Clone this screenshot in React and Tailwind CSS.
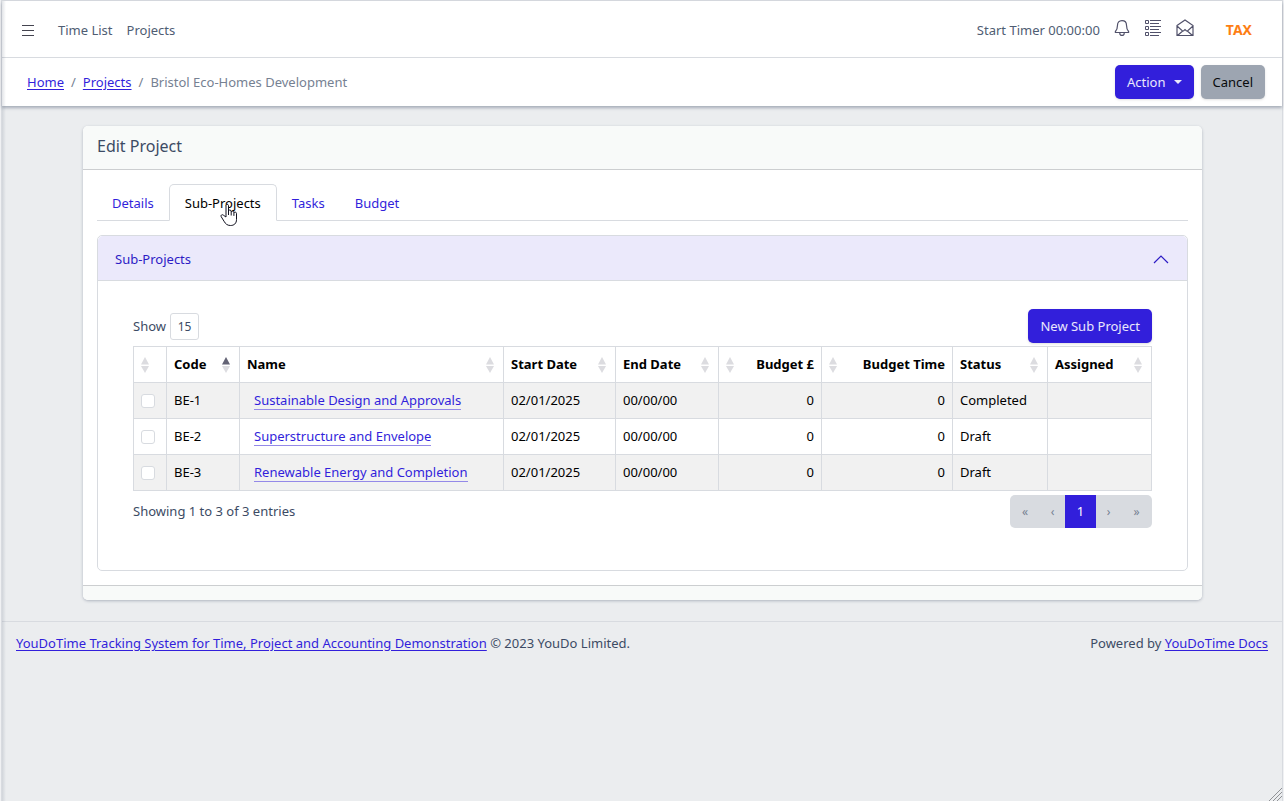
const columns = [
  { label: "", width: "w-[33px]" },
  { label: "Code", width: "w-[73px]", sorted: true },
  { label: "Name" },
  { label: "Start Date", width: "w-28" },
  { label: "End Date", width: "w-[103px]" },
  { label: "Budget £", width: "w-[103px]", right: true },
  { label: "Budget Time", width: "w-[131px]", right: true },
  { label: "Status", width: "w-[95px]" },
  { label: "Assigned", width: "w-[104px]" },
];

const rows = [
  { code: "BE-1", name: "Sustainable Design and Approvals", status: "Completed" },
  { code: "BE-2", name: "Superstructure and Envelope", status: "Draft" },
  { code: "BE-3", name: "Renewable Energy and Completion", status: "Draft" },
];

const link = "text-[#321fdb] underline underline-offset-2";

function BellIcon() {
  return (
    <svg viewBox="0 0 16 16" className="size-4" fill="none" stroke="currentColor" strokeWidth="1.2">
      <path d="M8 .6c-3 0-4.500 2-4.500 4.600 0 3-.5 4.500-2.100 6.300v1h13.200v-1c-1.600-1.800-2.100-3.300-2.100-6.300C12.500 2.600 11 .6 8 .6Z" />
      <path d="M5.800 12.700v.5a2.200 2.200 0 0 0 4.400 0v-.5" />
    </svg>
  );
}

function ListIcon() {
  return (
    <svg viewBox="0 0 18 18" className="size-[18px]" fill="none" stroke="currentColor">
      <path d="M1.500 1.500h3v3h-3zM1.500 7.500h3v3h-3zM1.500 13.500h3v3h-3zM6 1.500h11M6 4.500h9M6 7.500h11M6 10.500h9M6 13.500h11M6 16.500h9" />
    </svg>
  );
}

function MailIcon() {
  return (
    <svg viewBox="0 0 18 18" className="size-[18px]" fill="none" stroke="currentColor" strokeWidth="1.2">
      <path d="M1 6.500 9 1l8 5.500v10H1zM1 7l5.500 5h1L9 10.500l1.500 1.500h1L17 7M1.500 16.500 7 11.700M16.500 16.500 11 11.700" />
    </svg>
  );
}

function SortIcon({ sorted }) {
  return (
    <svg viewBox="0 0 8 16" className="h-4 w-2 shrink-0">
      <path d="M4 0 8 7.500H0z" fill={sorted ? "#636375" : "#dcdce0"} />
      <path d="M0 9h8l-4 7z" fill="#dcdce0" />
    </svg>
  );
}

function Header() {
  return (
    <header className="relative bg-white shadow-[0_2px_3px_rgba(60,75,100,0.4)]">
      <div className="flex h-[57px] items-center border-b border-[#d8dbe0] pt-0.5 pr-[30px] pl-5 text-[#4f5d73]">
        <button aria-label="Toggle menu" className="flex w-3 flex-col gap-1">
          <span className="h-px w-full bg-[#44444f]" />
          <span className="h-px w-full bg-[#44444f]" />
          <span className="h-px w-full bg-[#44444f]" />
        </button>
        <nav className="ml-6 flex gap-[14px]">
          <a href="#time">Time List</a>
          <a href="#projects">Projects</a>
        </nav>
        <div className="ml-auto flex items-center">
          <button>Start Timer 00:00:00</button>
          <div className="ml-[14px] flex items-center gap-[14px] pb-1 text-[#51516a]">
            <button aria-label="Notifications"><BellIcon /></button>
            <button aria-label="Tasks"><ListIcon /></button>
            <button aria-label="Messages"><MailIcon /></button>
          </div>
          <a href="#tax" className="ml-8 text-sm font-bold text-[#fd7e14]">TAX</a>
        </div>
      </div>
      <div className="flex h-12 items-center pr-[17px] pl-[25px]">
        <nav aria-label="Breadcrumb" className="flex gap-[7px] text-[#768192]">
          <a href="#home" className={link}>Home</a>
          <span>/</span>
          <a href="#projects" className={link}>Projects</a>
          <span>/</span>
          <span>Bristol Eco-Homes Development</span>
        </nav>
        <div className="ml-auto flex gap-[7px]">
          <button className="flex h-[34px] items-center gap-2 rounded-[5px] bg-[#321fdb] px-3 text-white/90 shadow-sm">
            Action
            <span className="border-x-4 border-t-4 border-x-transparent" />
          </button>
          <button className="h-[34px] rounded-[5px] bg-[#9da5b1] px-3 text-[#080a0c] shadow-sm">Cancel</button>
        </div>
      </div>
    </header>
  );
}

function ProjectTable() {
  return (
    <table className="w-full table-fixed border-collapse text-left text-black">
      <thead>
        <tr className="h-9">
          {columns.map(({ label, width, right, sorted }) => (
            <th key={label} className={`border border-[#d8dbe0] px-[7px] font-bold whitespace-nowrap ${width || ""}`}>
              <div className={`flex items-center justify-between ${right ? "flex-row-reverse" : "pr-[2px]"}`}>
                {label && <span>{label}</span>}
                <SortIcon sorted={sorted} />
              </div>
            </th>
          ))}
        </tr>
      </thead>
      <tbody>
        {rows.map((row) => (
          <tr key={row.code} className="h-9 odd:bg-[#f1f1f1] [&>td]:border [&>td]:border-[#d8dbe0] [&>td]:px-[7px]">
            <td>
              <input
                type="checkbox"
                aria-label={`Select ${row.code}`}
                className="block size-[14px] appearance-none rounded-[3px] border border-[#d8dbe0] bg-white"
              />
            </td>
            <td>{row.code}</td>
            <td>
              <a href={`#${row.code}`} className="ml-[7px] border-b border-[#9489e8] text-[#321fdb]">{row.name}</a>
            </td>
            <td>02/01/2025</td>
            <td>00/00/00</td>
            <td className="text-right">0</td>
            <td className="text-right">0</td>
            <td>{row.status}</td>
            <td />
          </tr>
        ))}
      </tbody>
    </table>
  );
}

function Pagination() {
  return (
    <nav aria-label="Pages" className="flex h-[33px] overflow-hidden rounded-[5px] bg-[#d8dbe0] text-xs text-[#768192]">
      <button aria-label="First page" className="w-[30px]">«</button>
      <button aria-label="Previous page" className="w-[25px]">‹</button>
      <button className="w-[31px] bg-[#321fdb] text-[13px] text-white">1</button>
      <button aria-label="Next page" className="w-[25px]">›</button>
      <button aria-label="Last page" className="w-[31px]">»</button>
    </nav>
  );
}

function HandCursor() {
  return (
    <svg viewBox="0 0 18 24" className="absolute top-[18px] left-[50px] h-6 w-[18px]" fill="white" stroke="#11111f" strokeLinejoin="round">
      <path d="M6 14V2.500C6 1 8.500 1 8.500 2.500V8c0-1.300 2.700-1.300 2.700.2V9c0-1.300 2.700-1.100 2.700.4v.5c0-1.200 2.600-1 2.600.5v6.100c0 4-2.500 6-6 6-3.400 0-5-1.700-6.500-4.300l-2.800-4.500c-.8-1.500 1-2.700 2.200-1.500zM8.500 8v4M11.200 9v3.500M13.900 9.900v3" />
    </svg>
  );
}

export default function App() {
  return (
    <div className="bg-[#f0f1f3] px-px font-['Noto_Sans','Open_Sans',sans-serif] text-[13px] leading-[21px] text-[#3c4b64]">
      <div className="relative min-h-screen border-x border-t border-[#d8dbe0] bg-[#ebedef]">
        <Header />
        <main className="pt-5 pr-20 pb-[21px] pl-[81px]">
          <section className="overflow-hidden rounded-[5px] bg-white shadow-[0_1px_3px_rgba(60,75,100,0.35)]">
            <h1 className="h-11 border-b border-[#ccced0] bg-[#f8faf9] px-[14px] pt-2 text-base leading-6">Edit Project</h1>
            <div className="p-[14px]">
              <div role="tablist" className="flex h-[37px] border-b border-[#d8dbe0] text-[#321fdb]">
                <button role="tab" className="px-[15px] pt-0.5">Details</button>
                <button role="tab" aria-selected="true" className="relative -mb-px rounded-t-[5px] border border-b-white border-[#d8dbe0] bg-white px-[15px] pt-0.5 text-black">
                  Sub-Projects
                  <HandCursor />
                </button>
                <button role="tab" className="px-[15px] pt-0.5">Tasks</button>
                <button role="tab" className="px-[15px] pt-0.5">Budget</button>
              </div>
              <div className="mt-[14px] rounded-[5px] border border-[#d8dbe0]">
                <button className="flex h-[45px] w-full items-center justify-between rounded-t-[5px] border-b border-[#d8dbe0] bg-[#ebe9fb] pt-0.5 pr-[18px] pl-[17px] text-[#2d1cc5]">
                  Sub-Projects
                  <svg viewBox="0 0 16 9" className="h-[9px] w-4" fill="none" stroke="currentColor" strokeWidth="1.2">
                    <path d="M1 8l7-7 7 7" />
                  </svg>
                </button>
                <div className="px-[35px] pt-7 pb-[42px]">
                  <div className="mb-[3px] flex items-center justify-between">
                    <label className="flex items-center gap-1">
                      Show
                      <input defaultValue="15" className="h-[27px] w-[29px] rounded-[3px] border border-[#d8dbe0] text-center text-xs" />
                    </label>
                    <button className="h-[34px] rounded-[5px] bg-[#321fdb] px-3 text-white/90 shadow-sm">New Sub Project</button>
                  </div>
                  <ProjectTable />
                  <div className="mt-1 flex items-center justify-between">
                    <span>Showing 1 to 3 of 3 entries</span>
                    <Pagination />
                  </div>
                </div>
              </div>
            </div>
            <div className="h-[15px] border-t border-[#ccced0] bg-[#f8faf9]" />
          </section>
        </main>
        <footer className="flex justify-between border-t border-[#d8dbe0] px-[14px] py-[11px]">
          <span>
            <a href="#youdotime" className={link}>YouDoTime Tracking System for Time, Project and Accounting Demonstration</a> © 2023 YouDo Limited.
          </span>
          <span>
            Powered by <a href="#docs" className={link}>YouDoTime Docs</a>
          </span>
        </footer>
        <div className="pointer-events-none absolute inset-y-0 left-0 w-1 bg-linear-to-r from-[#3c4b64]/15 to-transparent" />
        <svg viewBox="0 0 13 13" className="absolute right-0 bottom-0 size-[13px]" stroke="#909296">
          <path d="M0 13 13 0M4 13l9-9M8 13l5-5" />
        </svg>
      </div>
    </div>
  );
}
